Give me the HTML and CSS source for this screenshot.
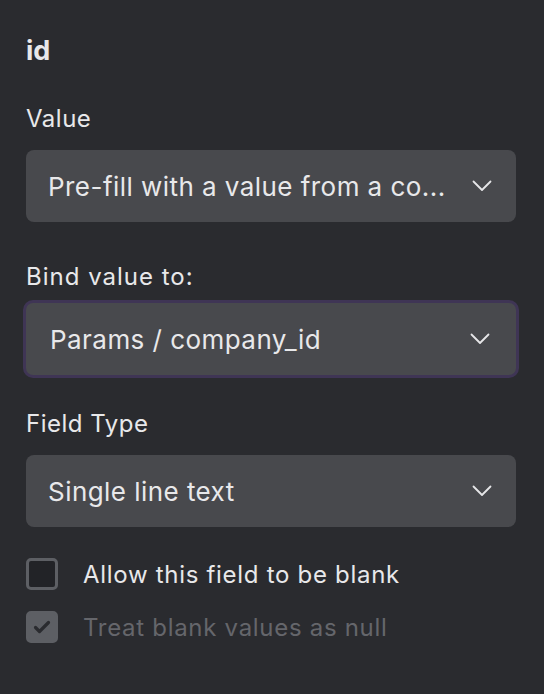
FILE: index.html
```html
<!DOCTYPE html>
<html>
<head>
<meta charset="utf-8">
<link rel="stylesheet" href="styles.css">
</head>
<body>
<div class="panel">
  <div class="title">id</div>
  <div class="field">
    <div class="label">Value</div>
    <div class="select">
      <span class="select-text">Pre-fill with a value from a co...</span>
      <svg class="chev" width="20" height="12" viewBox="0 0 20 12"><path d="M1.5 1.5 L10 10 L18.5 1.5" fill="none" stroke="#e6e6e8" stroke-width="1.8" stroke-linecap="round" stroke-linejoin="round"/></svg>
    </div>
  </div>
  <div class="field field-bind">
    <div class="label">Bind value to:</div>
    <div class="select focused">
      <span class="select-text">Params / company_id</span>
      <svg class="chev" width="20" height="12" viewBox="0 0 20 12"><path d="M1.5 1.5 L10 10 L18.5 1.5" fill="none" stroke="#e6e6e8" stroke-width="1.8" stroke-linecap="round" stroke-linejoin="round"/></svg>
    </div>
  </div>
  <div class="field field-type">
    <div class="label">Field Type</div>
    <div class="select">
      <span class="select-text">Single line text</span>
      <svg class="chev" width="20" height="12" viewBox="0 0 20 12"><path d="M1.5 1.5 L10 10 L18.5 1.5" fill="none" stroke="#e6e6e8" stroke-width="1.8" stroke-linecap="round" stroke-linejoin="round"/></svg>
    </div>
  </div>
  <div class="checks">
    <label class="check">
      <span class="box"></span>
      <span class="check-text">Allow this field to be blank</span>
    </label>
    <label class="check disabled">
      <span class="box checked">
        <svg width="20" height="16" viewBox="0 0 20 16"><path d="M3.5 8.5 L7.5 12.5 L16.5 3.5" fill="none" stroke="#2a2b2f" stroke-width="3.2" stroke-linecap="round" stroke-linejoin="round"/></svg>
      </span>
      <span class="check-text">Treat blank values as null</span>
    </label>
  </div>
</div>
</body>
</html>
```

FILE: styles.css
```css
html, body {
  margin: 0;
  padding: 0;
  background: #2a2b2f;
  height: 100%;
}
body {
  font-family: Inter, "Noto Sans", sans-serif;
  color: #e8e8ea;
}
.panel {
  padding: 35px 28px 0 26px;
  display: flex;
  flex-direction: column;
}
.title {
  font-size: 27px;
  font-weight: 700;
  line-height: 32px;
  margin-bottom: 37px;
}
.field {
  display: flex;
  flex-direction: column;
}
.label {
  font-size: 24px;
  letter-spacing: 0.5px;
  line-height: 30px;
  margin-bottom: 16px;
}
.field-bind {
  margin-top: 40px;
}
.field-bind .label {
  margin-bottom: 8px;
  letter-spacing: 1px;
}
.field-type {
  margin-top: 31px;
}
.select {
  height: 72px;
  box-sizing: border-box;
  background: #48494d;
  border-radius: 8px;
  display: flex;
  align-items: center;
  justify-content: space-between;
  padding: 0 24px 0 22px;
}
.select.focused {
  height: 78px;
  border: 3px solid #3f3555;
  border-radius: 10px;
  margin: 0 -3px;
  padding: 0 26px 0 24px;
}
.select-text {
  font-size: 26px;
  letter-spacing: 0.45px;
  color: #e8e8ea;
  white-space: nowrap;
}
.chev {
  display: block;
}
.checks {
  display: flex;
  flex-direction: column;
  gap: 21px;
  margin-top: 31px;
}
.check {
  display: flex;
  align-items: center;
  gap: 25px;
  font-size: 24px;
  letter-spacing: 0.7px;
}
.box {
  width: 32px;
  height: 32px;
  flex: none;
  box-sizing: border-box;
  border: 3px solid #5d5f64;
  border-radius: 5px;
  background: #222327;
  display: flex;
  align-items: center;
  justify-content: center;
}
.box.checked {
  background: #5d5f64;
}
.disabled .check-text {
  color: #65666b;
}
```
